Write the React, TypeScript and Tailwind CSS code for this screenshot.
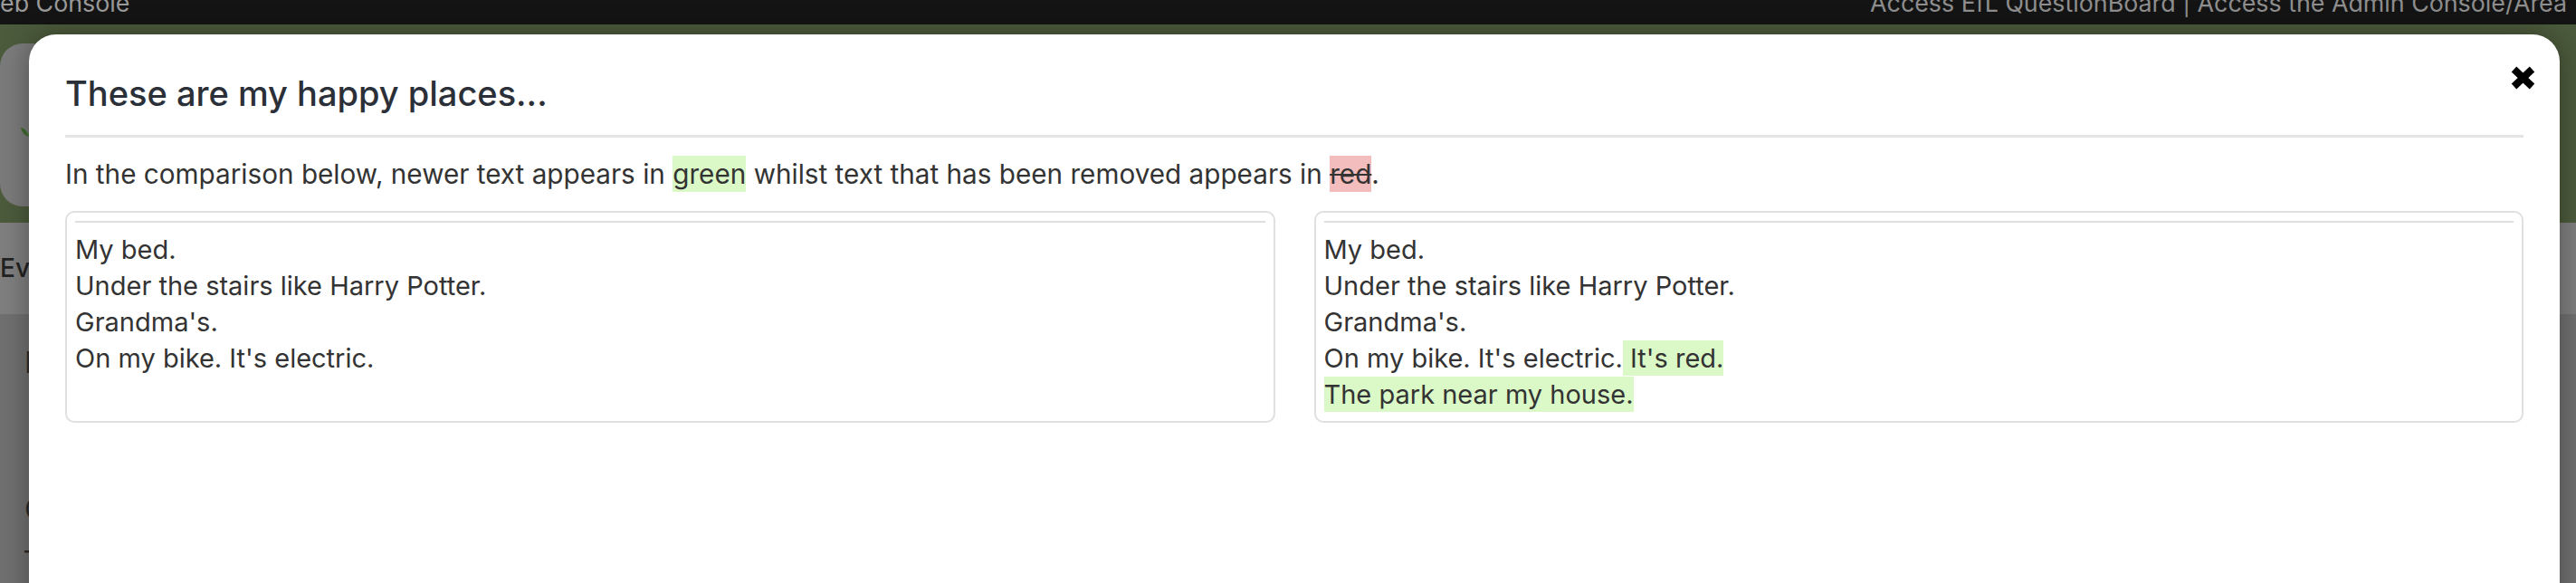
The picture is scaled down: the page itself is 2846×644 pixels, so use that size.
import React from "react";

function Box({ children }: { children: React.ReactNode }) {
  return (
    <div className="border-2 border-[#e0e0e0] rounded-[10px] p-[9px]">
      <div className="h-[2px] bg-[#dedede]" />
      <div className="mt-[10px] text-[29px] leading-[40px] text-[#333333]">{children}</div>
    </div>
  );
}

export default function App() {
  return (
    <div className="relative w-[2846px] h-[644px] overflow-hidden bg-[#6e6e6e] font-[Inter,sans-serif]">
      {/* background page (dimmed by the modal backdrop) */}
      <div className="flex flex-col h-full">
        <div className="h-[27px] bg-[#141414] flex justify-between items-start overflow-hidden shrink-0">
          <span className="-ml-[25px] -mt-[10px] text-[26.8px] leading-[26px] text-[#9a9a9a] whitespace-nowrap">
            Web Console
          </span>
          <span className="mr-[10px] -mt-[10px] text-[26.8px] leading-[26px] text-[#8e8e8e] whitespace-nowrap">
            Access EfL QuestionBoard | Access the Admin Console/Area
          </span>
        </div>
        <div className="h-[219px] bg-[#4c5b3c] shrink-0 pt-[21px]">
          <div className="w-[400px] h-[180px] rounded-[25px] bg-[#7b7b7b] pt-[88px] pl-[22px]">
            <svg width="18" height="16" viewBox="0 0 18 16">
              <path d="M9 15 C9 10 6 6 1 5 C2 10 5 13 9 15 Z" fill="#3f6b2e" />
              <path d="M9 15 C9 9 12 4 17 3 C16 9 13 13 9 15 Z" fill="#4b7c36" />
            </svg>
          </div>
        </div>
        <div className="h-[101px] bg-[#7f7f7f] shrink-0 pt-[30px]">
          <div className="w-[32px] overflow-hidden whitespace-nowrap text-[28px] leading-[40px] text-[#222222] font-medium">
            Evi
          </div>
        </div>
        <div className="flex-1 bg-[#707070] text-[32px] text-[#2a2a2a]">
          <div className="w-[32px] overflow-hidden whitespace-nowrap pl-[27px]">
            <div className="mt-[34px] leading-[40px]">N</div>
            <div className="mt-[122px] leading-[40px]">C</div>
            <div className="mt-[10px] leading-[30px]">–</div>
          </div>
        </div>
      </div>

      {/* modal */}
      <div className="absolute left-[32px] top-[38px] right-[18px] h-[700px] bg-white rounded-t-[30px] shadow-[0_0_32px_rgba(0,0,0,0.35)] pt-[42px] px-[40px]">
        <button className="absolute right-[26px] top-[35px] w-[29px] h-[26px]" aria-label="Close">
          <svg width="29" height="26" viewBox="0 0 29 26">
            <path d="M4.5 3.5 L24.5 22.5 M24.5 3.5 L4.5 22.5" stroke="#000" strokeWidth="8" />
          </svg>
        </button>
        <h5 className="text-[38px] font-medium leading-[46px] text-[#2b2f38]">These are my happy places...</h5>
        <div className="mt-[23px] h-[3px] bg-[#e4e4e4]" />
        <p className="mt-[20px] text-[29.7px] leading-[40px] text-[#333333]">
          In the comparison below, newer text appears in{" "}
          <span className="bg-[#dbf9c7] py-[2px]">green</span> whilst text that has been removed appears in{" "}
          <span className="bg-[#f4bdbd] py-[2px] line-through">red</span>.
        </p>
        <div className="mt-[21px] grid grid-cols-2 gap-[43px]">
          <Box>
            <div>My bed.</div>
            <div>Under the stairs like Harry Potter.</div>
            <div>Grandma's.</div>
            <div>On my bike. It's electric.</div>
          </Box>
          <Box>
            <div>My bed.</div>
            <div>Under the stairs like Harry Potter.</div>
            <div>Grandma's.</div>
            <div>
              On my bike. It's electric.<span className="bg-[#dbf9c7] py-[2px]"> It's red.</span>
            </div>
            <div>
              <span className="bg-[#dbf9c7] py-[2px]">The park near my house.</span>
            </div>
          </Box>
        </div>
      </div>
    </div>
  );
}
